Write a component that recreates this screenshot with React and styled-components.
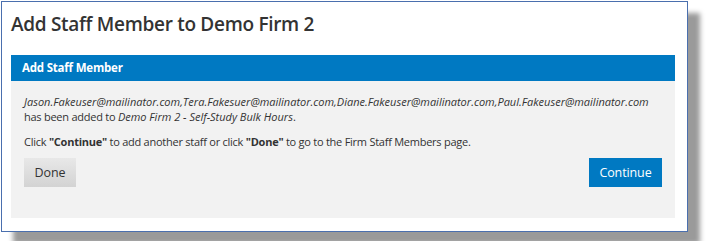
import React from 'react';
import styled, { createGlobalStyle } from 'styled-components';

const GlobalStyle = createGlobalStyle`
  html, body {
    margin: 0;
    padding: 0;
    background: #ffffff;
  }
  body {
    font-family: "Open Sans", "Noto Sans", sans-serif;
    color: #333333;
  }
`;

const Page = styled.div`
  width: 712px;
  height: 241px;
  overflow: hidden;
  padding: 1px 0 0 1px;
  box-sizing: border-box;
`;

const Window = styled.div`
  width: 687px;
  height: 231px;
  box-sizing: border-box;
  background: #ffffff;
  border: 1px solid #4a6fae;
  box-shadow: 12px 12px 5px #9a9a9a;
  padding: 8px 12px 0 9px;
`;

const Title = styled.h1`
  margin: 0;
  font-size: 19px;
  font-weight: 600;
  line-height: 28px;
  color: #333333;
  letter-spacing: -0.3px;
`;

const Panel = styled.section`
  margin-top: 17px;
  background: #f2f2f2;
`;

const PanelHeader = styled.div`
  background: #0079c2;
  color: #ffffff;
  font-size: 11.5px;
  font-weight: 700;
  letter-spacing: -0.2px;
  height: 26px;
  line-height: 26px;
  padding: 0 11px;
`;

const PanelBody = styled.div`
  padding: 13px 13px 31px 13px;
  font-size: 11px;
  line-height: 15px;
  letter-spacing: -0.25px;
`;

const Para = styled.p`
  margin: 0 0 ${p => p.gap || 0}px 0;
  em { font-style: italic; letter-spacing: 0; }
  strong { font-weight: 700; }
`;

const Actions = styled.div`
  display: flex;
  justify-content: space-between;
  align-items: center;
  margin-top: 9px;
`;

const Button = styled.button`
  width: ${p => (p.primary ? 73 : 52)}px;
  height: 29px;
  padding: 0;
  border: none;
  border-radius: 0;
  font-family: inherit;
  font-size: 12.5px;
  letter-spacing: -0.1px;
  cursor: pointer;
  color: ${p => (p.primary ? '#ffffff' : '#333333')};
  background: ${p => (p.primary ? '#0079c2' : 'linear-gradient(#e8e8e8, #d3d3d3)')};
`;

export default function App() {
  return (
    <>
      <GlobalStyle />
      <Page>
        <Window>
          <Title>Add Staff Member to Demo Firm 2</Title>
          <Panel>
            <PanelHeader>Add Staff Member</PanelHeader>
            <PanelBody>
              <Para gap={10}>
                <em>Jason.Fakeuser@mailinator.com,Tera.Fakesuer@mailinator.com,Diane.Fakeuser@mailinator.com,Paul.Fakeuser@mailinator.com</em>
                <br />
                has been added to <em>Demo Firm 2 - Self-Study Bulk Hours</em>.
              </Para>
              <Para>
                Click <strong>"Continue"</strong> to add another staff or click <strong>"Done"</strong> to go to the Firm Staff Members page.
              </Para>
              <Actions>
                <Button>Done</Button>
                <Button primary>Continue</Button>
              </Actions>
            </PanelBody>
          </Panel>
        </Window>
      </Page>
    </>
  );
}
